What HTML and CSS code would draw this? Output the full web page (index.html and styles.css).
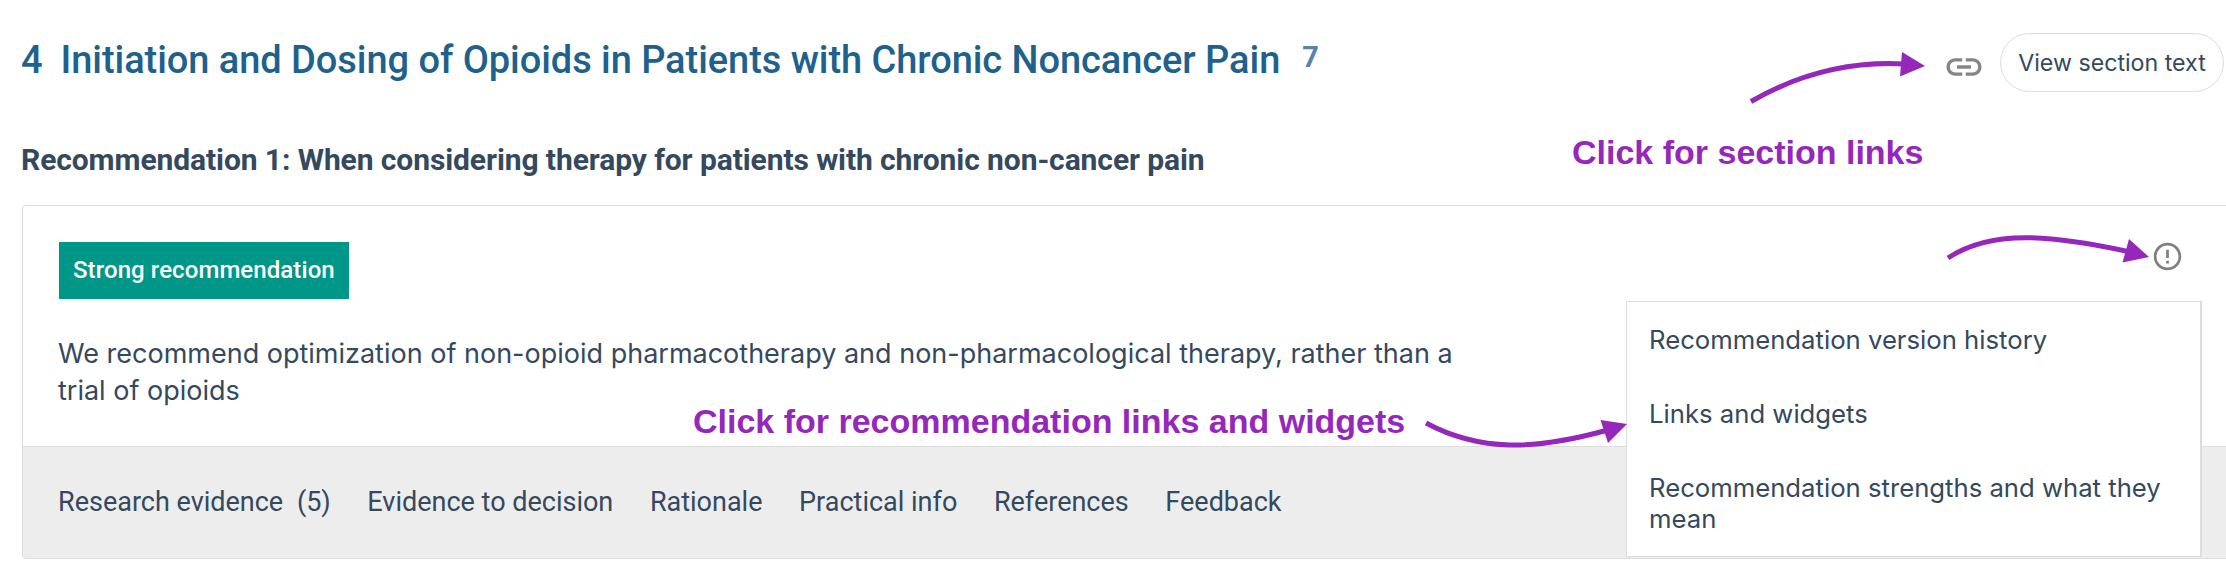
FILE: index.html
```html
<!DOCTYPE html>
<html lang="en">
<head>
  <meta charset="UTF-8">
  <meta name="viewport" content="width=device-width, initial-scale=1.0">
  <title>Guideline section</title>
  <link rel="stylesheet" href="styles.css">
</head>
<body>
  <header class="section-header">
    <h1><span class="number">4</span><span class="title">Initiation and Dosing of Opioids in Patients with Chronic Noncancer Pain</span><span class="count">7</span></h1>
    <div class="actions">
      <svg class="link-icon" viewBox="0 0 24 24"><path d="M3.9 12c0-1.71 1.39-3.1 3.1-3.1h4V7H7c-2.76 0-5 2.24-5 5s2.24 5 5 5h4v-1.9H7c-1.71 0-3.1-1.39-3.1-3.1zM8 13h8v-2H8v2zm9-6h-4v1.9h4c1.71 0 3.1 1.39 3.1 3.1s-1.39 3.1-3.1 3.1h-4V17h4c2.76 0 5-2.24 5-5s-2.24-5-5-5z"/></svg>
      <button class="view-button">View section text</button>
    </div>
  </header>

  <h2>Recommendation 1: When considering therapy for patients with chronic non-cancer pain</h2>

  <div class="card">
    <div class="card-body">
      <div class="card-top">
        <span class="badge">Strong recommendation</span>
        <svg class="info-icon" viewBox="0 0 24 24"><path d="M11 15h2v2h-2zm0-8h2v6h-2zm.99-5C6.47 2 2 6.48 2 12s4.47 10 9.99 10C17.52 22 22 17.52 22 12S17.52 2 11.99 2zM12 20a8 8 0 1 1 0-16 8 8 0 0 1 0 16z"/></svg>
      </div>
      <p>We recommend optimization of non-opioid pharmacotherapy and non-pharmacological therapy, rather than a trial of opioids</p>
    </div>
    <nav class="tabs">
      <span>Research evidence <span class="tab-count">(5)</span></span>
      <span>Evidence to decision</span>
      <span>Rationale</span>
      <span>Practical info</span>
      <span>References</span>
      <span>Feedback</span>
    </nav>
    <div class="menu">
      <div>Recommendation version history</div>
      <div>Links and widgets</div>
      <div>Recommendation strengths and what they mean</div>
    </div>
  </div>

  <!-- help notes over the page -->
  <div class="note note-section">Click for section links</div>
  <div class="note note-widgets">Click for recommendation links and widgets</div>
  <svg class="arrows" viewBox="0 0 2226 568">
    <path class="line" d="M1751 101.500C1797 75 1847 61 1904 64"/>
    <path class="head" d="M1925 66L1902 52L1900 76.500z"/>
    <path class="line" d="M1948 258C1991 229 2051 235 2128 251.500"/>
    <path class="head" d="M2149 257L2129 239L2122.500 262.500z"/>
    <path class="line" d="M1426 423C1480 452 1535 450 1606 430.500"/>
    <path class="head" d="M1627 424L1600.500 420L1608 443z"/>
  </svg>
</body>
</html>
```

FILE: styles.css
```css
* {
  margin: 0;
  padding: 0;
  box-sizing: border-box;
}
body {
  width: 2226px;
  height: 568px;
  padding-left: 22px;
  position: relative;
  overflow: hidden;
  background: #fff;
  color: #34495e;
  font-family: Roboto, sans-serif;
}
.section-header {
  display: flex;
  justify-content: space-between;
  align-items: flex-start;
  height: 136px;
  padding: 33px 2px 0 0;
}
h1 {
  display: flex;
  align-items: flex-start;
  margin-left: -1px;
  font-size: 38px;
  font-weight: 500;
  line-height: 54px;
  letter-spacing: -0.06px;
  color: #1f618d;
  white-space: nowrap;
}
.title {
  margin-left: 18px;
}
.count {
  margin-left: 22px;
  font-size: 29px;
  font-weight: 700;
  line-height: 48px;
  color: #5585ab;
}
.actions {
  display: flex;
  align-items: center;
}
.link-icon {
  width: 42px;
  height: 42px;
  margin: 8px 15px 0 0;
  fill: #868686;
}
.view-button {
  width: 224px;
  height: 59px;
  border: 1px solid #ddd;
  border-radius: 30px;
  background: none;
  color: #34495e;
  font: 23.2px Inter, sans-serif;
  white-space: nowrap;
}
h2 {
  margin-left: -1px;
  font-size: 30px;
  font-weight: 700;
  line-height: 48px;
  letter-spacing: -0.09px;
  height: 69px;
  white-space: nowrap;
}
.card {
  position: relative;
  height: 354px;
  border: 1px solid #ddd;
  border-right: none;
  border-radius: 4px 0 0 4px;
}
.card-body {
  height: 240px;
  padding: 36px 42px 0 36px;
}
.card-top {
  display: flex;
  justify-content: space-between;
  align-items: flex-start;
}
.badge {
  padding: 0 14px;
  background: #009688;
  color: #fff;
  font-size: 24px;
  font-weight: 500;
  line-height: 57px;
  letter-spacing: 0.08px;
}
.info-icon {
  width: 33px;
  height: 33px;
  margin-top: -2px;
  fill: #808080;
}
.card-body p {
  width: 1420px;
  margin: 36px 0 0 -1px;
  font-family: Inter, sans-serif;
  font-size: 27px;
  line-height: 37px;
}
.tabs {
  display: flex;
  align-items: center;
  gap: 36.6px;
  height: 112px;
  padding: 0 35px 2px;
  border-top: 1px solid #ddd;
  background: #ededed;
  font-size: 27px;
  white-space: nowrap;
}
.tab-count {
  margin-left: 7px;
}
.menu {
  position: absolute;
  top: 95px;
  left: 1603px;
  width: 576px;
  height: 256px;
  padding: 22px 22px;
  border: 1px solid #ddd;
  border-right-width: 2px;
  background: #fff;
  font-family: Inter, sans-serif;
  font-size: 25.7px;
  line-height: 31px;
}
.menu div {
  margin-bottom: 43px;
}
.note {
  position: absolute;
  color: #9528bb;
  font: bold 34px/26px "Liberation Sans", sans-serif;
  white-space: nowrap;
}
.note-section {
  left: 1572px;
  top: 139px;
}
.note-widgets {
  left: 693px;
  top: 408px;
}
.arrows {
  position: absolute;
  top: 0;
  left: 0;
  width: 2226px;
  height: 568px;
}
.line {
  fill: none;
  stroke: #9528bb;
  stroke-width: 5;
}
.head {
  fill: #9528bb;
}
```
